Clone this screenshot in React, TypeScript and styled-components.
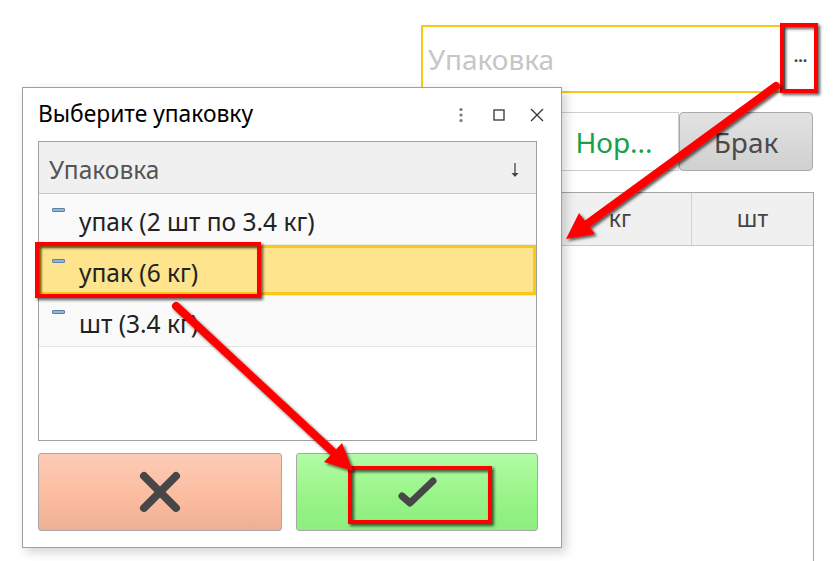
import React from "react";
import styled, { createGlobalStyle } from "styled-components";

const Global = createGlobalStyle`
  html, body { margin: 0; padding: 0; background: #fff; }
  body { font-family: "Noto Sans", "Open Sans", sans-serif; }
`;

const Page = styled.div`
  position: relative;
  width: 839px;
  height: 561px;
  overflow: hidden;
  background: #fff;
`;

const Form = styled.div`
  display: flex;
  flex-direction: column;
  align-items: flex-start;
  height: 100%;
  box-sizing: border-box;
  padding: 25px 0 0 421px;
`;

const LookupField = styled.div`
  display: flex;
  width: 397px;
  height: 68px;
  box-sizing: border-box;
  border: 2px solid #f6c915;
  background: #fff;
`;

const Placeholder = styled.div`
  flex: 1;
  display: flex;
  align-items: center;
  padding: 0 0 0 5px;
  font-size: 28px;
  color: #c6c6c6;
`;

const DotsButton = styled.div`
  width: 31px;
  border-left: 2px solid #a8a8a8;
  display: flex;
  align-items: center;
  justify-content: center;
  font-size: 16px;
  font-weight: bold;
  color: #444;
  padding-bottom: 6px;
`;

const SegmentRow = styled.div`
  display: flex;
  margin: 19px 0 0 128px;
  height: 59px;
`;

const SegButton = styled.div<{ $kind: "norm" | "defect" }>`
  display: flex;
  align-items: center;
  justify-content: center;
  box-sizing: border-box;
  font-size: 28px;
  width: ${(p) => (p.$kind === "norm" ? "130px" : "134px")};
  color: ${(p) => (p.$kind === "norm" ? "#17a047" : "#4a4a4a")};
  background: ${(p) =>
    p.$kind === "norm" ? "#fff" : "linear-gradient(#e2e2e2, #d0d0d0)"};
  border: 1px solid ${(p) => (p.$kind === "norm" ? "#cfcfcf" : "#a9a9a9")};
  border-radius: ${(p) => (p.$kind === "norm" ? "0" : "4px")};
`;

const Table = styled.div`
  margin: 21px 0 0 128px;
  width: 265px;
  flex: 1;
  box-sizing: border-box;
  border: 1px solid #a6a6a6;
  border-left: none;
  border-bottom: none;
`;

const TableHead = styled.div`
  display: grid;
  grid-template-columns: 143px 1fr;
  height: 52px;
  background: #f0f0f0;
  border-bottom: 1px solid #c8c8c8;
`;

const HeadCell = styled.div<{ $first?: boolean }>`
  display: flex;
  align-items: center;
  justify-content: center;
  font-size: 23px;
  color: #444;
  border-right: ${(p) => (p.$first ? "1px solid #d2d2d2" : "none")};
  padding-bottom: 2px;
`;

const Dialog = styled.div`
  position: absolute;
  left: 22px;
  top: 87px;
  width: 540px;
  height: 461px;
  box-sizing: border-box;
  border: 1px solid #a0a0a0;
  background: #fff;
  box-shadow: 4px 4px 10px rgba(0, 0, 0, 0.18);
  display: flex;
  flex-direction: column;
`;

const TitleBar = styled.div`
  display: flex;
  align-items: center;
  height: 53px;
  padding: 0 5px 0 15px;
`;

const Title = styled.div`
  flex: 1;
  font-size: 22.8px;
  color: #000;
  padding-bottom: 3px;
`;

const WinButton = styled.div`
  width: 38px;
  height: 30px;
  display: flex;
  align-items: center;
  justify-content: center;
`;

const Body = styled.div`
  display: flex;
  flex-direction: column;
  padding: 0 24px 15px 15px;
  flex: 1;
`;

const ListBox = styled.div`
  height: 300px;
  box-sizing: border-box;
  border: 1px solid #a0a0a0;
  display: flex;
  flex-direction: column;
`;

const ListHeader = styled.div`
  display: flex;
  align-items: center;
  height: 51px;
  flex: none;
  background: #f0f0f0;
  border-bottom: 1px solid #c8c8c8;
  padding: 0 16px 0 10px;
  font-size: 24.5px;
  color: #555;
`;

const HeaderLabel = styled.div`
  flex: 1;
  padding-top: 3px;
`;

const SortIcon = styled.div`
  align-self: flex-start;
  margin-top: 10px;
`;

const Row = styled.div<{ $selected?: boolean }>`
  display: flex;
  align-items: center;
  height: 51px;
  flex: none;
  box-sizing: border-box;
  padding-left: 13px;
  border-bottom: 1px solid #e6e6e6;
  background: ${(p) => (p.$selected ? "#fde48d" : "#fafafa")};
  box-shadow: ${(p) => (p.$selected ? "inset 0 0 0 3px #f8c81c" : "none")};
  font-size: 24.5px;
  color: #222;
`;

const RowIcon = styled.div`
  align-self: flex-start;
  margin-top: 14px;
  width: 13px;
  height: 4px;
  box-sizing: border-box;
  background: #93b4d4;
  border: 1px solid #5d82a8;
  border-radius: 1px;
  margin-right: 14px;
  flex: none;
`;

const RowText = styled.div`
  padding-top: 4px;
`;

const ButtonRow = styled.div`
  display: grid;
  grid-template-columns: 244px 242px;
  column-gap: 14px;
  margin-top: 12px;
  height: 78px;
`;

const ActionButton = styled.div<{ $kind: "cancel" | "ok" }>`
  display: flex;
  align-items: center;
  justify-content: center;
  box-sizing: border-box;
  border: 1px solid #a8a8a8;
  border-radius: 3px;
  background: ${(p) =>
    p.$kind === "cancel"
      ? "linear-gradient(#fdcbb6, #fbbb9e 60%, #edaf97)"
      : "linear-gradient(#b2fca4, #97f386 60%, #8dee7f)"};
`;

const Overlay = styled.svg`
  position: absolute;
  left: 0;
  top: 0;
  pointer-events: none;
`;

export default function App() {
  return (
    <Page>
      <Global />
      <Form>
        <LookupField>
          <Placeholder>Упаковка</Placeholder>
          <DotsButton>...</DotsButton>
        </LookupField>
        <SegmentRow>
          <SegButton $kind="norm">Нор...</SegButton>
          <SegButton $kind="defect">Брак</SegButton>
        </SegmentRow>
        <Table>
          <TableHead>
            <HeadCell $first>кг</HeadCell>
            <HeadCell>шт</HeadCell>
          </TableHead>
        </Table>
      </Form>

      <Dialog>
        <TitleBar>
          <Title>Выберите упаковку</Title>
          <WinButton>
            <svg width="6" height="16" viewBox="0 0 6 16">
              <circle cx="3" cy="2.5" r="1.6" fill="#777" />
              <circle cx="3" cy="8" r="1.6" fill="#777" />
              <circle cx="3" cy="13.5" r="1.6" fill="#777" />
            </svg>
          </WinButton>
          <WinButton>
            <svg width="12" height="12" viewBox="0 0 12 12">
              <rect x="1" y="1" width="10" height="10" fill="none" stroke="#333" strokeWidth="1.3" />
            </svg>
          </WinButton>
          <WinButton>
            <svg width="14" height="14" viewBox="0 0 14 14">
              <path d="M1 1 L13 13 M13 1 L1 13" stroke="#333" strokeWidth="1.3" />
            </svg>
          </WinButton>
        </TitleBar>
        <Body>
          <ListBox>
            <ListHeader>
              <HeaderLabel>Упаковка</HeaderLabel>
              <SortIcon>
                <svg width="10" height="16" viewBox="0 0 10 16">
                  <path d="M5 1 V14" stroke="#444" strokeWidth="1.3" />
                  <path d="M1.5 11 L5 15 L8.5 11 Z" fill="#444" />
                </svg>
              </SortIcon>
            </ListHeader>
            <Row>
              <RowIcon />
              <RowText>упак (2 шт по 3.4 кг)</RowText>
            </Row>
            <Row $selected>
              <RowIcon />
              <RowText>упак (6 кг)</RowText>
            </Row>
            <Row>
              <RowIcon />
              <RowText>шт (3.4 кг)</RowText>
            </Row>
          </ListBox>
          <ButtonRow>
            <ActionButton $kind="cancel">
              <svg width="44" height="44" viewBox="0 0 44 44">
                <path d="M6 6 L38 38 M38 6 L6 38" stroke="#474747" strokeWidth="8" strokeLinecap="round" />
              </svg>
            </ActionButton>
            <ActionButton $kind="ok">
              <svg width="44" height="36" viewBox="0 0 44 36">
                <path d="M7 22 L15 29 L38 7" stroke="#474747" strokeWidth="7" strokeLinecap="round" strokeLinejoin="round" fill="none" />
              </svg>
            </ActionButton>
          </ButtonRow>
        </Body>
      </Dialog>

      <Overlay width="839" height="561" viewBox="0 0 839 561">
        <defs>
          <filter id="sh" x="-20%" y="-20%" width="140%" height="140%">
            <feDropShadow dx="2" dy="2" stdDeviation="1.6" floodColor="#000" floodOpacity="0.65" />
          </filter>
        </defs>
        <g filter="url(#sh)" fill="none" stroke="#ff0000" strokeWidth="4">
          <rect x="782" y="25" width="34" height="66" />
          <rect x="37" y="244" width="222" height="52" />
          <rect x="350" y="468" width="140" height="54" />
        </g>
        <g filter="url(#sh)">
          <line x1="776" y1="86" x2="587" y2="224" stroke="#ff0000" strokeWidth="8" strokeLinecap="round" />
          <polygon points="566,239 595,234 579,213" fill="#ff0000" />
          <line x1="176" y1="306" x2="333" y2="452" stroke="#ff0000" strokeWidth="8" strokeLinecap="round" />
          <polygon points="353,471 324,462 342,443" fill="#ff0000" />
        </g>
      </Overlay>
    </Page>
  );
}
